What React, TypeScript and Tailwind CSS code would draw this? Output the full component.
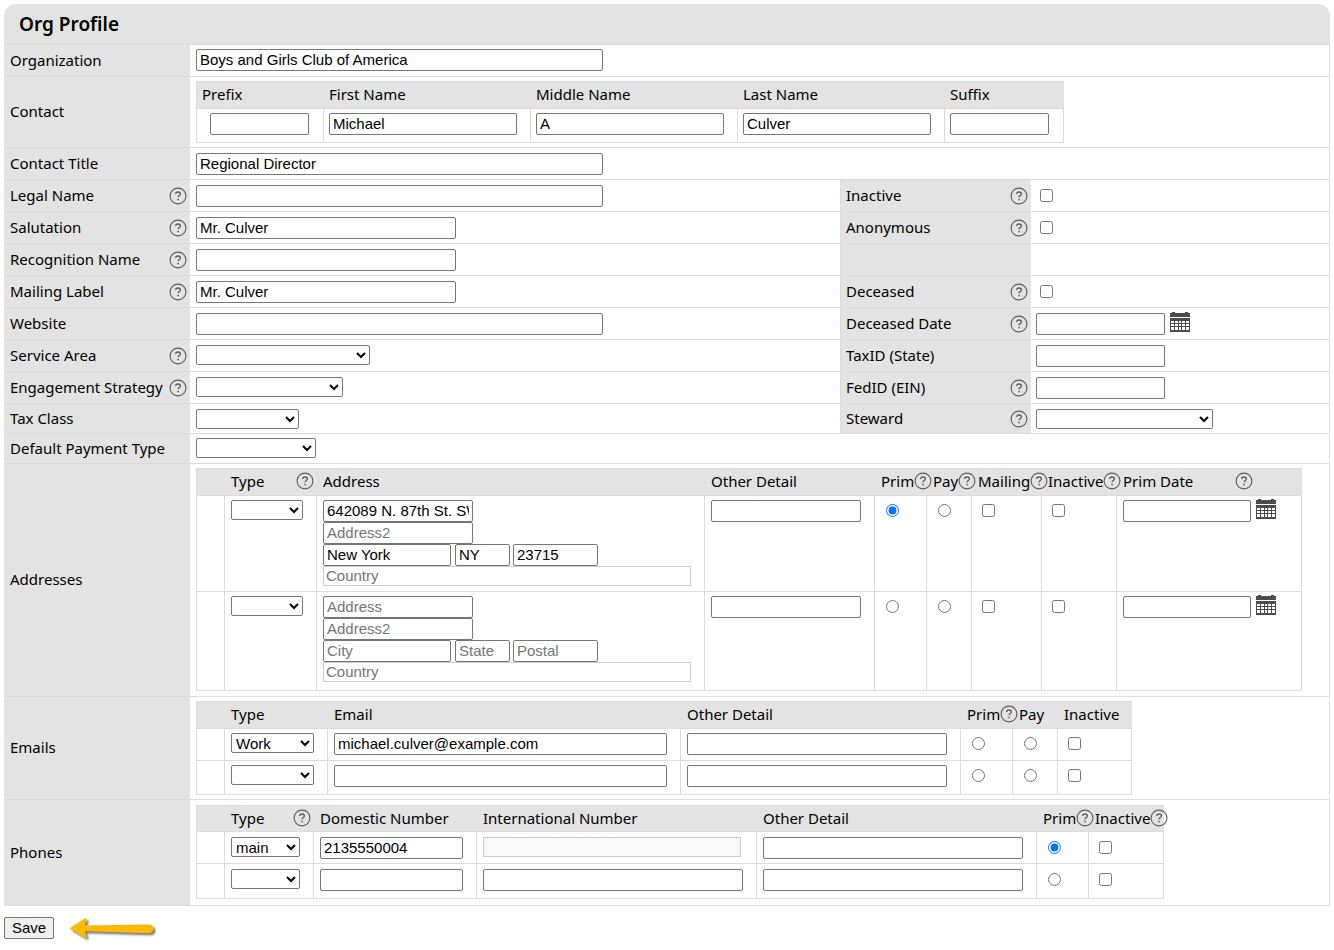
import type { ReactNode } from "react";

const FIELD = "block h-[22px] shrink-0 rounded-[2px] border border-[#767676] bg-white px-[3px] font-['Liberation_Sans',sans-serif] text-[15px] text-black placeholder:text-[#757575]";
const PLAIN = "block h-5 shrink-0 border border-[#cccccc] bg-white px-[2px] font-['Liberation_Sans',sans-serif] text-[15px] text-black placeholder:text-[#757575]";

interface InputProps {
  label: string;
  width: string;
  value?: string;
  placeholder?: string;
}

function TextInput({ label, width, value, placeholder }: InputProps) {
  return <input type="text" aria-label={label} defaultValue={value} placeholder={placeholder} className={`${FIELD} ${width}`} />;
}

function Select({ label, width, value = "" }: InputProps) {
  return (
    <select
      aria-label={label}
      defaultValue={value}
      className={`block h-5 rounded-[2px] border border-[#767676] bg-white pb-0.5 font-['Liberation_Sans',sans-serif] text-[15px] leading-4 text-black ${width}`}
    >
      <option value={value}>{value}</option>
    </select>
  );
}

function Check({ label }: { label: string }) {
  return <input type="checkbox" aria-label={label} className="mt-1 ml-1 block h-[13px] w-[13px]" />;
}

function Radio({ label, name, checked }: { label: string; name: string; checked?: boolean }) {
  return <input type="radio" aria-label={label} name={name} defaultChecked={checked} className="mt-1 ml-[5px] block h-[13px] w-[13px]" />;
}

function Help() {
  return (
    <svg viewBox="0 0 18 18" className="h-[18px] w-[18px] shrink-0" fill="none" stroke="#5c5c5c" aria-hidden="true">
      <circle cx="9" cy="9" r="7.9" strokeWidth="1.1" />
      <path d="M6.6 7C6.7 5.6 7.6 5 9 5s2.4.7 2.4 2c0 1.5-2.3 1.7-2.3 3.3" strokeWidth="1.3" />
      <path d="M9.1 11.8v1.5" strokeWidth="1.5" />
    </svg>
  );
}

function Calendar() {
  return (
    <button type="button" aria-label="Pick a date" className="-mt-px ml-[5px] block h-5 w-5 shrink-0">
      <svg viewBox="0 0 20 20" className="h-5 w-5" aria-hidden="true">
        <path d="M2 0h3v1h10V0h3v1h2v4H0V1h2zM0 6h20v14H0z" fill="#504a50" />
        <path
          d="M1 9h3v2H1zM5 9h3v2H5zM9 9h2v2H9zM12 9h3v2h-3zM16 9h3v2h-3zM1 12h3v2H1zM5 12h3v2H5zM9 12h2v2H9zM12 12h3v2h-3zM16 12h3v2h-3zM1 15h3v3H1zM5 15h3v3H5zM9 15h2v3H9zM12 15h3v3h-3zM16 15h3v3h-3z"
          fill="#fff"
        />
      </svg>
    </button>
  );
}

function Label({ text, help, right }: { text: string; help?: boolean; right?: boolean }) {
  return (
    <div className={`flex items-center justify-between bg-[#e3e3e3] pr-[3px] ${right ? "border-l border-[#dcdcdc] pl-[5px]" : "pl-[6px]"}`}>
      <span className="pb-0.5">{text}</span>
      {help && <Help />}
    </div>
  );
}

interface RowProps {
  label: string;
  help?: boolean;
  height?: string;
  pad?: string;
  children: ReactNode;
  right?: { label: string; help?: boolean; field?: ReactNode };
}

function Row({ label, help, height = "min-h-8", pad = "pt-[5px]", children, right }: RowProps) {
  return (
    <div
      className={`grid border-b border-[#dcdcdc] ${height} ${
        right ? "grid-cols-[186px_1fr_191px_298px]" : "grid-cols-[186px_1fr]"
      }`}
    >
      <Label text={label} help={help} />
      <div className={`pl-[6px] ${pad}`}>{children}</div>
      {right && <Label text={right.label} help={right.help} right />}
      {right && <div className={`flex pl-[5px] ${pad}`}>{right.field}</div>}
    </div>
  );
}

interface Column {
  title: string;
  width: string;
  help?: boolean;
  gap?: string;
}

interface SubTableProps {
  columns: Column[];
  rows: ReactNode[][];
  width: string;
  heights: string[];
  head?: string;
  inset?: string;
  top?: string;
}

function SubTable({ columns, rows, width, heights, head = "h-[27px]", inset = "pl-[6px]", top = "pt-1" }: SubTableProps) {
  return (
    <table className={`table-fixed border-separate border-spacing-0 border-t border-l border-[#dcdcdc] ${width}`}>
      <thead>
        <tr className={`bg-[#e3e3e3] ${head}`}>
          {columns.map((col, i) => (
            <th key={i} className={`border-b border-[#dcdcdc] text-left align-top font-normal whitespace-nowrap ${inset} ${col.width}`}>
              <span className={`flex items-center pt-px ${col.gap ?? ""}`}>
                {col.title}
                {col.help && <Help />}
              </span>
            </th>
          ))}
        </tr>
      </thead>
      <tbody>
        {rows.map((cells, r) => (
          <tr key={r} className={heights[r]}>
            {cells.map((content, c) => (
              <td key={c} className={`border-r border-b border-[#dcdcdc] align-top ${inset} ${top}`}>
                {content}
              </td>
            ))}
          </tr>
        ))}
      </tbody>
    </table>
  );
}

const CONTACT_COLUMNS: Column[] = [
  { title: "Prefix", width: "w-[127px]" },
  { title: "First Name", width: "w-[207px]" },
  { title: "Middle Name", width: "w-[207px]" },
  { title: "Last Name", width: "w-[207px]" },
  { title: "Suffix", width: "w-[119px]" },
];

const ADDRESS_COLUMNS: Column[] = [
  { title: "", width: "w-7" },
  { title: "Type", width: "w-[92px]", help: true, gap: "justify-between pr-[3px]" },
  { title: "Address", width: "w-[388px]" },
  { title: "Other Detail", width: "w-[170px]" },
  { title: "Prim", width: "w-[52px]", help: true },
  { title: "Pay", width: "w-[45px]", help: true },
  { title: "Mailing", width: "w-[70px]", help: true },
  { title: "Inactive", width: "w-[75px]", help: true },
  { title: "Prim Date", width: "w-[185px]", help: true, gap: "gap-[42px]" },
];

const EMAIL_COLUMNS: Column[] = [
  { title: "", width: "w-7" },
  { title: "Type", width: "w-[103px]" },
  { title: "Email", width: "w-[353px]" },
  { title: "Other Detail", width: "w-[280px]" },
  { title: "Prim", width: "w-[52px]", help: true },
  { title: "Pay", width: "w-[45px]" },
  { title: "Inactive", width: "w-[74px]" },
];

const PHONE_COLUMNS: Column[] = [
  { title: "", width: "w-7" },
  { title: "Type", width: "w-[89px]", help: true, gap: "justify-between pr-[3px]" },
  { title: "Domestic Number", width: "w-[163px]" },
  { title: "International Number", width: "w-[280px]" },
  { title: "Other Detail", width: "w-[280px]" },
  { title: "Prim", width: "w-[52px]", help: true },
  { title: "Inactive", width: "w-[75px]", help: true },
];

interface Address {
  street?: string;
  city?: string;
  state?: string;
  postal?: string;
  primary?: boolean;
}

const ADDRESSES: Address[] = [
  { street: "642089 N. 87th St. SW", city: "New York", state: "NY", postal: "23715", primary: true },
  {},
];

function addressCells(a: Address) {
  return [
    null,
    <Select label="Address type" width="w-[72px]" />,
    <div>
      <TextInput label="Address" placeholder="Address" value={a.street} width="w-[150px]" />
      <TextInput label="Address2" placeholder="Address2" width="w-[150px]" />
      <div className="flex">
        <TextInput label="City" placeholder="City" value={a.city} width="mr-1 w-32" />
        <TextInput label="State" placeholder="State" value={a.state} width="mr-[3px] w-[55px]" />
        <TextInput label="Postal" placeholder="Postal" value={a.postal} width="w-[85px]" />
      </div>
      <input type="text" aria-label="Country" placeholder="Country" className={`${PLAIN} w-[368px]`} />
    </div>,
    <TextInput label="Other detail" width="w-[150px]" />,
    <Radio label="Primary address" name="address-prim" checked={a.primary} />,
    <Radio label="Payment address" name="address-pay" />,
    <Check label="Mailing" />,
    <Check label="Inactive" />,
    <div className="flex">
      <TextInput label="Primary date" width="w-32" />
      <Calendar />
    </div>,
  ];
}

function emailCells(type: string, email: string) {
  return [
    null,
    <Select label="Email type" width="w-[83px]" value={type} />,
    <TextInput label="Email" width="w-[333px]" value={email} />,
    <TextInput label="Other detail" width="w-[260px]" />,
    <Radio label="Primary email" name="email-prim" />,
    <Radio label="Payment email" name="email-pay" />,
    <Check label="Inactive" />,
  ];
}

function phoneCells(type: string, number: string, primary: boolean) {
  return [
    null,
    <Select label="Phone type" width="w-[69px]" value={type} />,
    <TextInput label="Domestic number" width="w-[143px]" value={number} />,
    primary ? (
      <input type="text" disabled aria-label="International number" className="block h-5 w-[258px] border border-[#cccccc] bg-[#f9f9f9]" />
    ) : (
      <TextInput label="International number" width="w-[260px]" />
    ),
    <TextInput label="Other detail" width="w-[260px]" />,
    <Radio label="Primary phone" name="phone-prim" checked={primary} />,
    <Check label="Inactive" />,
  ];
}

export default function App() {
  return (
    <form className="bg-white p-1 font-['Noto_Sans',sans-serif] text-[15px] leading-[22px] text-black">
      <h1 className="h-[41px] rounded-t-xl border-b border-[#dcdcdc] bg-[#e3e3e3] pt-[6px] pl-[15px] text-[19px] leading-7 font-semibold">
        Org Profile
      </h1>
      <div className="border-r border-[#dcdcdc]">
        <Row label="Organization" pad="pt-1">
          <TextInput label="Organization" width="w-[407px]" value="Boys and Girls Club of America" />
        </Row>
        <Row label="Contact" height="min-h-[71px]" pad="pt-1">
          <SubTable
            columns={CONTACT_COLUMNS}
            width="w-[868px]"
            heights={["h-[34px]"]}
            inset="pl-[5px]"
            rows={[
              [
                <TextInput label="Prefix" width="ml-2 w-[99px]" />,
                <TextInput label="First name" width="w-[188px]" value="Michael" />,
                <TextInput label="Middle name" width="w-[188px]" value="A" />,
                <TextInput label="Last name" width="w-[188px]" value="Culver" />,
                <TextInput label="Suffix" width="w-[99px]" />,
              ],
            ]}
          />
        </Row>
        <Row label="Contact Title">
          <TextInput label="Contact title" width="w-[407px]" value="Regional Director" />
        </Row>
        <Row label="Legal Name" help right={{ label: "Inactive", help: true, field: <Check label="Inactive" /> }}>
          <TextInput label="Legal name" width="w-[407px]" />
        </Row>
        <Row label="Salutation" help right={{ label: "Anonymous", help: true, field: <Check label="Anonymous" /> }}>
          <TextInput label="Salutation" width="w-[260px]" value="Mr. Culver" />
        </Row>
        <Row label="Recognition Name" help right={{ label: "" }}>
          <TextInput label="Recognition name" width="w-[260px]" />
        </Row>
        <Row label="Mailing Label" help right={{ label: "Deceased", help: true, field: <Check label="Deceased" /> }}>
          <TextInput label="Mailing label" width="w-[260px]" value="Mr. Culver" />
        </Row>
        <Row
          label="Website"
          right={{
            label: "Deceased Date",
            help: true,
            field: (
              <>
                <TextInput label="Deceased date" width="w-[129px]" />
                <Calendar />
              </>
            ),
          }}
        >
          <TextInput label="Website" width="w-[407px]" />
        </Row>
        <Row label="Service Area" help right={{ label: "TaxID (State)", field: <TextInput label="Tax ID" width="w-[129px]" /> }}>
          <Select label="Service area" width="w-[174px]" />
        </Row>
        <Row label="Engagement Strategy" help right={{ label: "FedID (EIN)", help: true, field: <TextInput label="Fed ID" width="w-[129px]" /> }}>
          <Select label="Engagement strategy" width="w-[147px]" />
        </Row>
        <Row label="Tax Class" height="min-h-[30px]" right={{ label: "Steward", help: true, field: <Select label="Steward" width="w-[177px]" /> }}>
          <Select label="Tax class" width="w-[103px]" />
        </Row>
        <Row label="Default Payment Type" height="min-h-[30px]" pad="pt-1">
          <Select label="Default payment type" width="w-[120px]" />
        </Row>
        <Row label="Addresses" height="min-h-[233px]" pad="pt-1">
          <SubTable columns={ADDRESS_COLUMNS} width="w-[1106px]" heights={["h-24", "h-[99px]"]} rows={ADDRESSES.map(addressCells)} />
        </Row>
        <Row label="Emails" height="min-h-[103px]" pad="pt-1">
          <SubTable
            columns={EMAIL_COLUMNS}
            width="w-[936px]"
            heights={["h-8", "h-[34px]"]}
            rows={[emailCells("Work", "michael.culver@example.com"), emailCells("", "")]}
          />
        </Row>
        <Row label="Phones" height="min-h-[106px]">
          <SubTable
            columns={PHONE_COLUMNS}
            width="w-[968px]"
            head="h-[26px]"
            heights={["h-8", "h-[35px]"]}
            top="pt-[5px]"
            rows={[phoneCells("main", "2135550004", true), phoneCells("", "", false)]}
          />
        </Row>
      </div>
      <div className="flex h-[33px] items-end">
        <button
          type="submit"
          className="h-[22px] w-[50px] rounded-[2px] border border-[#767676] bg-[#efefef] font-['Liberation_Sans',sans-serif] text-[15px] leading-5"
        >
          Save
        </button>
        <svg viewBox="0 0 96 24" className="ml-3 h-6 w-24 overflow-visible drop-shadow-[2px_2px_1px_rgba(0,0,0,0.55)]" aria-hidden="true">
          <path d="M3.5 13.5Q12 7.500 19 3.200q2-.8 1.500 1L19 10.500 82 9.500q5 .2 5.500 4-.5 4.800-5 4.800L19 16.300l1.500 5.200q.3 1.800-1.500 1z" fill="#fdb900" />
        </svg>
      </div>
    </form>
  );
}
